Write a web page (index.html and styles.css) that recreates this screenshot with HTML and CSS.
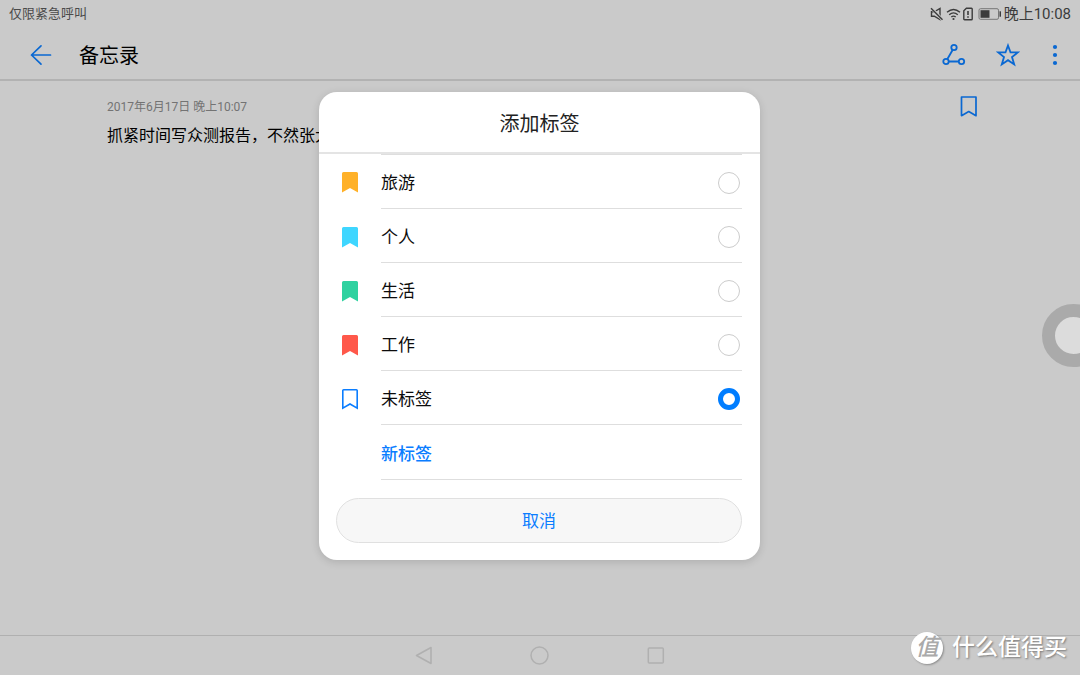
FILE: index.html
```html
<!DOCTYPE html>
<html lang="zh-CN">
<head>
<meta charset="utf-8">
<meta name="viewport" content="width=device-width, initial-scale=1">
<title>备忘录</title>
<link rel="stylesheet" href="styles.css">
</head>
<body>
<div class="screen">
  <div class="status-bar">
    <span class="carrier">仅限紧急呼叫</span>
    <div class="status-icons">
      <svg width="14" height="14" viewBox="0 0 14 14" fill="none" stroke="#3c3c3c" stroke-width="1.4"><path d="M1.500 4.800h2.800L10 1.500v11L4.300 9.200H1.500z"/><path d="M1.500 1.200l11 11.600" stroke="#cacaca" stroke-width="3"/><path d="M1 1.200l11.500 11.600"/></svg>
      <svg width="15" height="14" viewBox="0 0 15 14" fill="none" stroke="#3c3c3c" stroke-width="1.4"><path d="M1 5.200q6.500-5.600 13 0M3.200 7.700q4.300-3.600 8.600 0M5.300 10q2.200-1.800 4.400 0"/><circle cx="7.500" cy="12" r="1.100" fill="#3c3c3c" stroke="none"/></svg>
      <svg width="10" height="14" viewBox="0 0 10 14" fill="none" stroke="#3c3c3c" stroke-width="1.4"><path d="M3.400 1.200h5a.8.8 0 0 1 .8.8v10a.8.8 0 0 1-.8.8H1.600a.8.8 0 0 1-.8-.8V3.800z"/><path d="M5 4v4M5 9.300v1.500" stroke-width="1.600"/></svg>
      <svg class="battery" width="24" height="14" viewBox="0 0 24 14"><rect x="1" y="1.700" width="19.500" height="10.600" rx="1.500" fill="none" stroke="#777"/><rect x="2.500" y="3.200" width="9" height="7.600" fill="#3c3c3c"/><rect x="21.500" y="4.300" width="1.500" height="5.400" fill="#3c3c3c"/></svg>
      <span class="clock">晚上10:08</span>
    </div>
  </div>

  <header class="app-bar">
    <button class="icon-button" aria-label="返回"><svg width="22" height="22" viewBox="0 0 22 22" fill="none" stroke="#0a68d2" stroke-width="1.700" stroke-linecap="round" stroke-linejoin="round"><path d="M20.500 11H1.500M11 1.800L1.500 11l9.500 9.200"/></svg></button>
    <h1 class="app-title">备忘录</h1>
    <div class="actions">
      <button class="icon-button" aria-label="分享"><svg width="24" height="24" viewBox="0 0 24 24" fill="none" stroke="#0a68d2" stroke-width="1.800"><circle cx="12" cy="4.500" r="2.700"/><circle cx="4" cy="18.500" r="2.700"/><circle cx="19.500" cy="18.500" r="2.700"/><path d="M10.600 7L5.400 16M6.800 18.500h9.900"/></svg></button>
      <button class="icon-button" aria-label="收藏"><svg width="24" height="24" viewBox="0 0 24 24" fill="none" stroke="#0a68d2" stroke-width="1.800"><path d="M12 2.500l2.500 6.900h7.300l-5.800 4.600 2.200 7.400L12 17.200l-6.200 4.200L8 14 2.200 9.400h7.300z"/></svg></button>
      <button class="icon-button" aria-label="更多"><svg width="24" height="24" viewBox="0 0 24 24" fill="#0a68d2"><circle cx="12" cy="4" r="2.100"/><circle cx="12" cy="12" r="2.100"/><circle cx="12" cy="20" r="2.100"/></svg></button>
    </div>
  </header>

  <main class="note">
    <div class="note-body">
      <time class="note-date">2017年6月17日 晚上10:07</time>
      <p class="note-text">抓紧时间写众测报告，不然张大</p>
    </div>
    <button class="icon-button note-tag" aria-label="标签"><svg width="18" height="22" viewBox="0 0 18 22" fill="none" stroke="#0a68d2" stroke-width="1.700" stroke-linejoin="round"><path d="M1.500 1h14.500v18.700L8.750 15.600l-7.250 4.100z"/></svg></button>
  </main>

  <nav class="nav-bar">
    <button class="icon-button" aria-label="后退"><svg width="20" height="20" viewBox="0 0 20 20" fill="none" stroke="#b0b0b0" stroke-width="1.600" stroke-linejoin="round"><path d="M17 1.500v16L2.500 9.500z"/></svg></button>
    <button class="icon-button" aria-label="主屏幕"><svg width="20" height="20" viewBox="0 0 20 20" fill="none" stroke="#b0b0b0" stroke-width="1.500"><circle cx="9.500" cy="9.500" r="8.500"/></svg></button>
    <button class="icon-button" aria-label="最近任务"><svg width="20" height="20" viewBox="0 0 20 20" fill="none" stroke="#b0b0b0" stroke-width="1.500"><rect x="2.300" y="2" width="15" height="15" rx="1"/></svg></button>
  </nav>

  <button class="float-ball" aria-label="悬浮按钮"></button>

  <div class="overlay">
    <form class="dialog" role="dialog" aria-labelledby="dialog-title">
      <h2 class="dialog-title" id="dialog-title">添加标签</h2>
      <div class="tag-list">
        <div class="tag-row">
          <svg class="tag-icon orange" viewBox="0 0 16 21"><path d="M1.500 0h13A1.500 1.500 0 0 1 16 1.500V20.500L8 16l-8 4.500V1.500A1.500 1.500 0 0 1 1.500 0z"/></svg>
          <label class="tag-label">旅游<input class="radio" type="radio" name="tag"></label>
        </div>
        <div class="tag-row">
          <svg class="tag-icon cyan" viewBox="0 0 16 21"><path d="M1.500 0h13A1.500 1.500 0 0 1 16 1.500V20.500L8 16l-8 4.500V1.500A1.500 1.500 0 0 1 1.500 0z"/></svg>
          <label class="tag-label">个人<input class="radio" type="radio" name="tag"></label>
        </div>
        <div class="tag-row">
          <svg class="tag-icon green" viewBox="0 0 16 21"><path d="M1.500 0h13A1.500 1.500 0 0 1 16 1.500V20.500L8 16l-8 4.500V1.500A1.500 1.500 0 0 1 1.500 0z"/></svg>
          <label class="tag-label">生活<input class="radio" type="radio" name="tag"></label>
        </div>
        <div class="tag-row">
          <svg class="tag-icon red" viewBox="0 0 16 21"><path d="M1.500 0h13A1.500 1.500 0 0 1 16 1.500V20.500L8 16l-8 4.500V1.500A1.500 1.500 0 0 1 1.500 0z"/></svg>
          <label class="tag-label">工作<input class="radio" type="radio" name="tag"></label>
        </div>
        <div class="tag-row">
          <svg class="tag-icon outline" viewBox="0 0 16 21"><path d="M1.600.8h12.800a.8.8 0 0 1 .8.8v17.600L8 15 .8 19.200V1.600a.8.800 0 0 1 .8-.8z"/></svg>
          <label class="tag-label">未标签<input class="radio" type="radio" name="tag" checked></label>
        </div>
        <div class="tag-row">
          <button class="new-tag" type="button">新标签</button>
        </div>
      </div>
      <button class="cancel" type="button">取消</button>
    </form>
  </div>

  <div class="watermark">
    <span class="watermark-logo">值</span>
    <span>什么值得买</span>
  </div>
</div>
</body>
</html>
```
FILE: styles.css
```css
* {
  box-sizing: border-box;
}

body {
  margin: 0;
  font-family: Roboto, "Noto Sans CJK SC", sans-serif;
  color: #0c0c0c;
  background: #cacaca;
}

button {
  font: inherit;
  border: 0;
  padding: 0;
  background: none;
  cursor: pointer;
}

svg {
  display: block;
  flex: none;
}

.screen {
  position: relative;
  display: flex;
  flex-direction: column;
  min-height: 100vh;
  overflow: hidden;
}

.status-bar {
  display: flex;
  justify-content: space-between;
  align-items: center;
  height: 28px;
  padding: 0 9px;
  color: #4a4a4a;
}

.carrier {
  font-size: 13px;
  line-height: 20px;
}

.status-icons {
  display: flex;
  align-items: center;
  gap: 2px;
  color: #3c3c3c;
}

.battery {
  margin-left: 3px;
}

.clock {
  font-size: 15px;
  line-height: 20px;
}

.app-bar {
  display: flex;
  align-items: center;
  height: 53px;
  padding: 2px 13px 0 30px;
  border-bottom: 2px solid #b2b2b2;
}

.icon-button {
  display: flex;
}

.app-title {
  margin: 0 0 0 27px;
  padding-top: 2px;
  font-size: 20px;
  line-height: 28px;
  font-weight: 400;
  color: #000;
}

.actions {
  display: flex;
  gap: 30px;
  margin-left: auto;
}

.actions .icon-button:last-child {
  margin-left: -7px;
}

.note {
  flex: 1;
  display: flex;
  justify-content: space-between;
  align-items: flex-start;
  padding: 15px 102px 0 107px;
}

.note-date {
  display: block;
  font-size: 12px;
  line-height: 22px;
  color: #737373;
}

.note-text {
  margin: 6px 0 0;
  font-size: 16px;
  line-height: 24px;
  color: #000;
}

.nav-bar {
  display: flex;
  justify-content: center;
  align-items: center;
  gap: 96px;
  height: 40px;
  border-top: 1px solid #b0b0b0;
}

.float-ball {
  position: absolute;
  right: -25px;
  top: 50%;
  width: 63px;
  height: 63px;
  margin-top: -34px;
  border: 13px solid #aaa;
  border-radius: 50%;
  background: #dcdcdc;
}

.overlay {
  position: absolute;
  inset: 0;
  display: flex;
  justify-content: center;
  align-items: center;
  padding: 17px 17px 40px 16px;
  pointer-events: none;
}

.dialog {
  width: 100%;
  max-width: 441px;
  border-radius: 18px;
  background: #fff;
  box-shadow: 0 2px 8px rgba(0, 0, 0, 0.14);
  padding-bottom: 17px;
  overflow: hidden;
  pointer-events: auto;
}

.dialog-title {
  margin: 0;
  padding: 18px 0 14px;
  border-bottom: 2px solid #e4e4e4;
  font-size: 20px;
  line-height: 28px;
  font-weight: 400;
  text-align: center;
  color: #222;
}

.tag-list {
  display: flex;
  flex-direction: column;
  padding: 0 18px 0 23px;
}

.tag-row {
  display: grid;
  grid-template-columns: 16px 1fr;
  column-gap: 23px;
  align-items: center;
}

.tag-icon {
  width: 16px;
  height: 21px;
  margin-top: 2px;
}

.orange {
  fill: #ffb129;
}

.cyan {
  fill: #3fd6ff;
}

.green {
  fill: #2fd2a0;
}

.red {
  fill: #ff584a;
}

.outline {
  fill: none;
  stroke: #0a7dff;
  stroke-width: 1.6px;
}

.tag-label,
.new-tag {
  grid-column: 2;
  display: flex;
  justify-content: space-between;
  align-items: center;
  height: 54px;
  padding: 3px 2px 0 0;
  border-bottom: 1px solid #dedede;
  font-size: 17px;
  line-height: 24px;
}

.tag-row:first-child .tag-label {
  height: 55px;
  border-top: 1px solid #dedede;
}

.new-tag {
  height: 55px;
  color: #0a7dff;
  font-weight: 500;
}

.radio {
  appearance: none;
  width: 22px;
  height: 22px;
  margin: 0;
  border: 1px solid #ccc;
  border-radius: 50%;
  background: #fff;
}

.radio:checked {
  border: 5px solid #007dff;
}

.cancel {
  display: block;
  width: calc(100% - 35px);
  height: 45px;
  margin: 18px 18px 0 17px;
  padding-top: 1px;
  border: 1px solid #e0e0e0;
  border-radius: 23px;
  background: #f7f7f7;
  color: #0a7dff;
  font-size: 17px;
  line-height: 24px;
}

.watermark {
  position: absolute;
  right: 13px;
  bottom: 10px;
  display: flex;
  align-items: center;
  gap: 9px;
  color: #fff;
  font-size: 23px;
  line-height: 34px;
  font-weight: 500;
  text-shadow: 1px 1px 2px rgba(0, 0, 0, 0.4);
}

.watermark-logo {
  width: 32px;
  height: 32px;
  border-radius: 50%;
  background: #fff;
  box-shadow: 1px 1px 2px rgba(0, 0, 0, 0.3);
  color: #aaa;
  font-size: 23px;
  line-height: 32px;
  font-style: italic;
  text-align: center;
  text-shadow: none;
}
```
